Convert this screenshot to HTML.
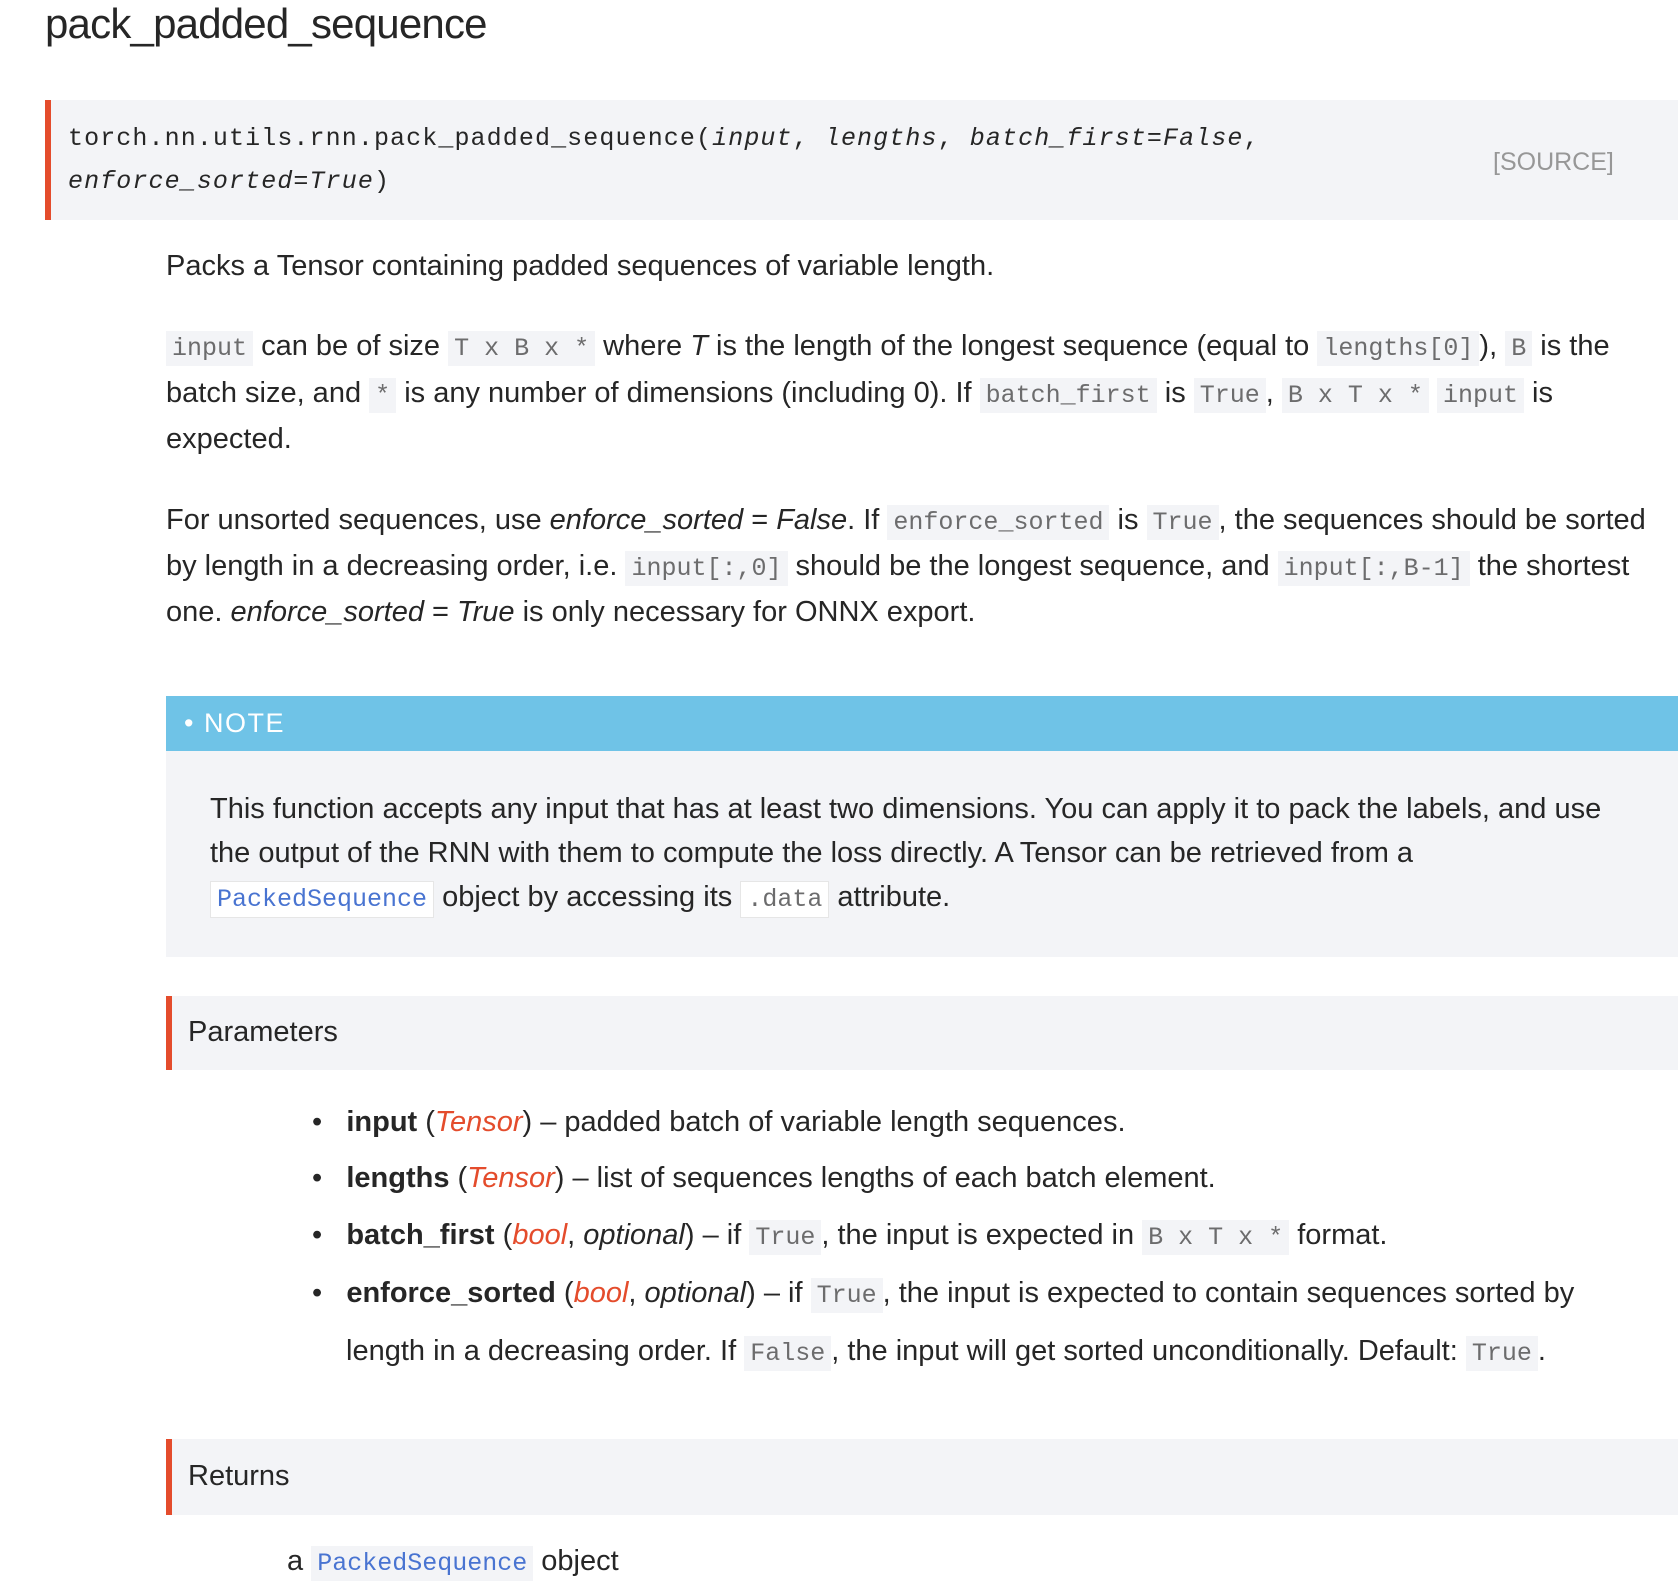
<!DOCTYPE html>
<html><head><meta charset="utf-8"><style>
body{margin:0;width:1678px;height:1572px;background:#fff;overflow:hidden;position:relative;font-family:"Liberation Sans",sans-serif;color:#262626}
.a{position:absolute;white-space:nowrap}
.t{font-size:29px;letter-spacing:0px}
code,.m{font-family:"Liberation Mono",monospace}
code{background:#f3f4f7;color:#6c6c6d;font-size:25px;padding:3px 6px;letter-spacing:0}
.box{position:absolute;background:#f3f4f7;border-left:6px solid #e44c2c;right:0}
.r{color:#e44c2c;font-style:italic}
.lk{color:#4974d1}
</style></head><body>
<div class="a" style="left:45px;top:0px;font-size:42px;font-weight:300;letter-spacing:-0.8px;color:#262626">pack_padded_sequence</div>

<div class="box" style="left:45px;top:100px;height:120px"></div>
<div class="a m" style="left:68px;top:124px;font-size:25px;letter-spacing:1.1px">torch.nn.utils.rnn.pack_padded_sequence(<i>input</i>, <i>lengths</i>, <i>batch_first=False</i>,</div>
<div class="a m" style="left:68px;top:167px;font-size:25px;letter-spacing:1.1px"><i>enforce_sorted=True</i>)</div>
<div class="a" style="left:1493px;top:148px;font-size:25px;color:#979797">[SOURCE]</div>

<div class="a t" style="left:166px;top:250px">Packs a Tensor containing padded sequences of variable length.</div>

<div class="a t" style="left:166px;top:330px"><code>input</code> can be of size <code>T x B x *</code> where <i>T</i> is the length of the longest sequence (equal to <code>lengths[0]</code>), <code>B</code> is the</div>
<div class="a t" style="left:166px;top:377px">batch size, and <code>*</code> is any number of dimensions (including 0). If <code>batch_first</code> is <code>True</code>, <code>B x T x *</code> <code>input</code> is</div>
<div class="a t" style="left:166px;top:423px">expected.</div>

<div class="a t" style="left:166px;top:504px">For unsorted sequences, use <i>enforce_sorted</i> = <i>False</i>. If <code>enforce_sorted</code> is <code>True</code>, the sequences should be sorted</div>
<div class="a t" style="left:166px;top:550px">by length in a decreasing order, i.e. <code>input[:,0]</code> should be the longest sequence, and <code>input[:,B-1]</code> the shortest</div>
<div class="a t" style="left:166px;top:596px">one. <i>enforce_sorted</i> = <i>True</i> is only necessary for ONNX export.</div>

<div style="position:absolute;left:166px;right:0;top:696px;height:55px;background:#6fc3e7"></div>
<div style="position:absolute;left:166px;right:0;top:751px;height:206px;background:#f3f4f7"></div>
<div class="a" style="left:184px;top:708px;font-size:27px;color:#fff;letter-spacing:1.5px">• NOTE</div>
<div class="a t" style="left:210px;top:793px">This function accepts any input that has at least two dimensions. You can apply it to pack the labels, and use</div>
<div class="a t" style="left:210px;top:837px">the output of the RNN with them to compute the loss directly. A Tensor can be retrieved from a</div>
<div class="a t" style="left:210px;top:881px"><code class="lk" style="background:#fff;border:1px solid #e6e6e6;color:#4974d1">PackedSequence</code> object by accessing its <code style="background:#fff;border:1px solid #e6e6e6">.data</code> attribute.</div>

<div class="box" style="left:166px;top:996px;height:74px"></div>
<div class="a t" style="left:188px;top:1016px">Parameters</div>

<div class="a t" style="left:312px;top:1106px">•&nbsp;&nbsp;&nbsp;<b>input</b> (<span class="r">Tensor</span>) – padded batch of variable length sequences.</div>
<div class="a t" style="left:312px;top:1162px">•&nbsp;&nbsp;&nbsp;<b>lengths</b> (<span class="r">Tensor</span>) – list of sequences lengths of each batch element.</div>
<div class="a t" style="left:312px;top:1219px">•&nbsp;&nbsp;&nbsp;<b>batch_first</b> (<span class="r">bool</span>, <i>optional</i>) – if <code>True</code>, the input is expected in <code>B x T x *</code> format.</div>
<div class="a t" style="left:312px;top:1277px">•&nbsp;&nbsp;&nbsp;<b>enforce_sorted</b> (<span class="r">bool</span>, <i>optional</i>) – if <code>True</code>, the input is expected to contain sequences sorted by</div>
<div class="a t" style="left:346px;top:1335px">length in a decreasing order. If <code>False</code>, the input will get sorted unconditionally. Default: <code>True</code>.</div>

<div class="box" style="left:166px;top:1439px;height:76px"></div>
<div class="a t" style="left:188px;top:1460px">Returns</div>
<div class="a t" style="left:287px;top:1545px">a <code class="lk" style="color:#4974d1">PackedSequence</code> object</div>
</body></html>
